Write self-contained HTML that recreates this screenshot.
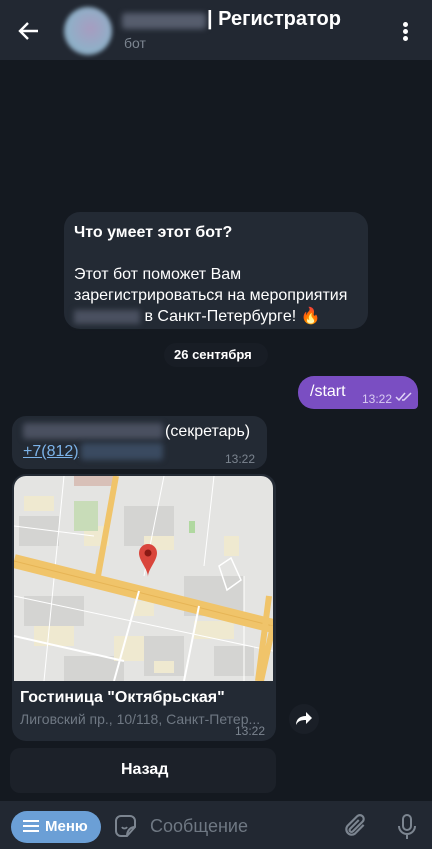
<!DOCTYPE html>
<html><head><meta charset="utf-8"><style>
*{margin:0;padding:0;box-sizing:border-box}
body{width:432px;height:849px;overflow:hidden;background:#141920;font-family:"Liberation Sans",sans-serif;position:relative;color:#fff}
.a{position:absolute}
.hdr{left:0;top:0;width:432px;height:60px;background:#222832}
.blur{background:#4a5060;filter:blur(3px);border-radius:3px}
.bub{background:#232a34;border-radius:14px}
.t{font-size:16px;white-space:nowrap}
</style></head><body>
<div class="a hdr"></div>
<svg class="a" style="left:18px;top:20px" width="22" height="22" viewBox="0 0 22 22"><path d="M20 11H3M10 3L2 11l8 8" stroke="#fff" stroke-width="2.4" fill="none"/></svg>
<div class="a" style="left:64px;top:7px;width:48px;height:48px;border-radius:50%;background:radial-gradient(circle at 55% 45%,#a79cc0,#8fb0c8 60%,#7c93a8);filter:blur(2px)"></div>
<div class="a blur" style="left:122px;top:13px;width:84px;height:16px;background:#565d6d"></div>
<div class="a" style="left:207px;top:8px;font-size:20px;font-weight:bold">| Регистратор</div>
<div class="a" style="left:124px;top:35px;font-size:14px;color:#7c8590">бот</div>
<div class="a" style="left:403px;top:22px;width:5px;height:5px;border-radius:50%;background:#fff;box-shadow:0 7px 0 #fff,0 14px 0 #fff"></div>

<div class="a bub" style="left:64px;top:212px;width:304px;height:117px;border-radius:16px"></div>
<div class="a t" style="left:74px;top:224px;font-weight:bold">Что умеет этот бот?</div>
<div class="a t" style="left:74px;top:264px;line-height:21px">Этот бот поможет Вам<br>зарегистрироваться на мероприятия<br><span style="display:inline-block;width:66px;height:14px;background:#4a5060;filter:blur(3px);vertical-align:middle"></span> в Санкт-Петербургe! 🔥</div>

<div class="a" style="left:164px;top:343px;width:104px;height:24px;border-radius:12px;background:#181d25"></div>
<div class="a" style="left:174px;top:347px;font-size:13px;font-weight:bold">26 сентября</div>

<div class="a" style="left:298px;top:376px;width:120px;height:33px;border-radius:16px 16px 4px 16px;background:#7a4ec2"></div>
<div class="a t" style="left:310px;top:383px">/start</div>
<div class="a" style="left:362px;top:392px;font-size:12px;color:#d9ccf2">13:22</div>
<svg class="a" style="left:395px;top:391px" width="18" height="12" viewBox="0 0 18 12"><path d="M1 6l3 3 6-7M7 9l2 0 7-7" stroke="#e0d4f6" stroke-width="1.5" fill="none"/></svg>

<div class="a bub" style="left:12px;top:416px;width:255px;height:53px"></div>
<div class="a blur" style="left:23px;top:423px;width:140px;height:16px"></div>
<div class="a t" style="left:165px;top:423px">(секретарь)</div>
<div class="a t" style="left:23px;top:443px;color:#7cb3e8;text-decoration:underline">+7(812)</div>
<div class="a blur" style="left:81px;top:443px;width:82px;height:17px;background:#3a4a60"></div>
<div class="a" style="left:225px;top:452px;font-size:12px;color:#7c8590">13:22</div>

<div class="a bub" style="left:12px;top:474px;width:264px;height:267px"></div>
<svg class="a" style="left:14px;top:476px;border-radius:12px 12px 0 0" width="259" height="205" viewBox="0 0 259 205">
<rect width="259" height="205" fill="#e4e4e2"/>
<g fill="#d4d4d2"><rect x="5" y="40" width="40" height="30"/><rect x="110" y="30" width="50" height="40"/><rect x="170" y="100" width="60" height="40"/><rect x="10" y="120" width="60" height="30"/><rect x="130" y="160" width="40" height="40"/><rect x="200" y="170" width="40" height="30"/><rect x="50" y="180" width="60" height="25"/></g>
<g fill="#efe9d0"><rect x="10" y="20" width="30" height="15"/><rect x="70" y="50" width="25" height="20"/><rect x="130" y="60" width="30" height="14"/><rect x="20" y="150" width="40" height="20"/><rect x="100" y="160" width="30" height="25"/><rect x="180" y="145" width="40" height="18"/><rect x="210" y="60" width="15" height="20"/><rect x="120" y="125" width="20" height="15"/><rect x="140" y="185" width="20" height="12"/></g>
<rect x="60" y="25" width="24" height="30" fill="#c8dcb8"/><rect x="175" y="45" width="6" height="12" fill="#b0d8a0"/><rect x="60" y="0" width="40" height="10" fill="#d8c0b8"/>
<g stroke="#fff" stroke-width="1" fill="none"><path d="M0 120L259 175M50 0L30 205M150 0L130 100M200 0L190 90M230 100L230 205M0 50L80 60"/></g>
<path d="M0 85L259 150" stroke="#f0c46a" stroke-width="14"/><path d="M0 85L259 150" stroke="#e6b455" stroke-width="1"/>
<path d="M102 0L84 100" stroke="#f0c46a" stroke-width="6"/>
<path d="M259 150L247 205M255 120L244 205" stroke="#f0c46a" stroke-width="6"/>
<path d="M0 160L110 185M125 115L100 205M185 130L170 205" stroke="#fff" stroke-width="2"/>
<path d="M205 90l12-8 10 22-14 10z" stroke="#fff" fill="none" stroke-width="1.5"/>
<path d="M134 68a9 9 0 0 1 9 9c0 8-9 16-9 24 0-8-9-16-9-24a9 9 0 0 1 9-9z" fill="#d9453b"/><circle cx="134" cy="77" r="3.5" fill="#8a1a14"/>
</svg>
<div class="a t" style="left:20px;top:689px;font-weight:bold">Гостиница "Октябрьская"</div>
<div class="a" style="left:20px;top:711px;font-size:14px;color:#6f7883">Лиговский пр., 10/118, Санкт-Петер...</div>
<div class="a" style="left:235px;top:724px;font-size:12px;color:#7c8590">13:22</div>
<div class="a" style="left:289px;top:704px;width:30px;height:30px;border-radius:50%;background:#1a1f27"></div>
<svg class="a" style="left:295px;top:711px" width="18" height="15" viewBox="0 0 18 15"><path d="M11 1l6 6-6 6V9C6 9 3 10 1 14 1 8 5 5 11 5z" fill="#fff"/></svg>

<div class="a" style="left:10px;top:748px;width:266px;height:45px;border-radius:10px;background:rgba(40,46,56,0.4)"></div>
<div class="a t" style="left:121px;top:761px;font-weight:bold">Назад</div>

<div class="a" style="left:0;top:801px;width:432px;height:48px;background:#222832"></div>
<div class="a" style="left:11px;top:811px;width:90px;height:32px;border-radius:16px;background:#6b9fd6"></div>
<div class="a" style="left:23px;top:820px;width:16px;height:2px;background:#fff;box-shadow:0 5px 0 #fff,0 10px 0 #fff"></div>
<div class="a" style="left:45px;top:818px;font-size:15px;font-weight:bold">Меню</div>
<svg class="a" style="left:114px;top:814px" width="24" height="24" viewBox="0 0 24 24"><path d="M21 13V7a5 5 0 0 0-5-5H7a5 5 0 0 0-5 5v10a5 5 0 0 0 5 5h6z M21 13c-4 0-8 3-8 9" stroke="#7c8590" stroke-width="2" fill="none"/><path d="M8 13c1 2 4 2 5 0" stroke="#7c8590" stroke-width="1.8" fill="none"/></svg>
<div class="a" style="left:150px;top:816px;font-size:18px;color:#6f7883">Сообщение</div>
<svg class="a" style="left:342px;top:813px" width="26" height="26" viewBox="0 0 24 24"><path d="M20 11l-8 8a5 5 0 0 1-7-7l9-9a3.3 3.3 0 0 1 5 5l-9 9a1.7 1.7 0 0 1-2.5-2.5l8-8" stroke="#7c8590" stroke-width="2" fill="none"/></svg>
<svg class="a" style="left:396px;top:813px" width="22" height="28" viewBox="0 0 22 28"><rect x="7" y="2" width="8" height="15" rx="4" stroke="#7c8590" stroke-width="2" fill="none"/><path d="M3 13a8 8 0 0 0 16 0M11 21v5" stroke="#7c8590" stroke-width="2" fill="none"/></svg>
</body></html>
